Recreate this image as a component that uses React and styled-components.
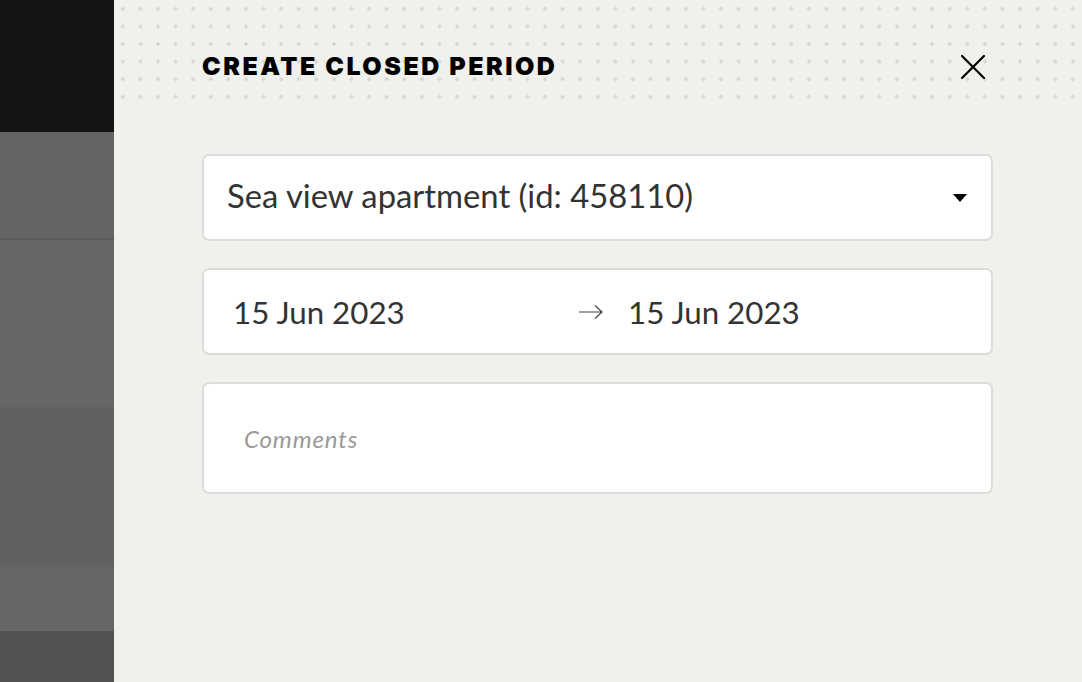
import React from "react";
import styled, { createGlobalStyle } from "styled-components";

const GlobalStyle = createGlobalStyle`
  html, body {
    margin: 0;
    padding: 0;
    height: 100%;
    overflow: hidden;
  }
  body {
    font-family: Lato, "Noto Sans", sans-serif;
    background: #f0f0ec;
  }
  #root {
    height: 100%;
  }
`;

const stripes = [
  { h: 132, c: "#141414" },
  { h: 106, c: "#646464" },
  { h: 2, c: "#5a5a5a" },
  { h: 167, c: "#666666" },
  { h: 158, c: "#616161" },
  { h: 66, c: "#666666" },
  { h: 51, c: "#525252" },
];

const CloseIcon = () => (
  <svg width="24" height="24" viewBox="0 0 24 24" fill="none">
    <path d="M1 1L23 23M23 1L1 23" stroke="#000" strokeWidth="2.2" strokeLinecap="square" />
  </svg>
);

const CaretIcon = () => (
  <svg width="14" height="8" viewBox="0 0 14 8">
    <path d="M0 0H14L7 8Z" fill="#000" />
  </svg>
);

const ArrowIcon = () => (
  <svg width="26" height="16" viewBox="0 0 26 16" fill="none">
    <path d="M1 8H24M17 1.5L24 8L17 14.5" stroke="#444" strokeWidth="1.2" />
  </svg>
);

const App = () => {
  return (
    <Page>
      <GlobalStyle />
      <Backdrop>
        {stripes.map((s, i) => (
          <Stripe key={i} $h={s.h} $c={s.c} />
        ))}
      </Backdrop>
      <Panel>
        <Header>
          <Title>Create closed period</Title>
          <CloseButton aria-label="Close">
            <CloseIcon />
          </CloseButton>
        </Header>
        <Form>
          <Field $h={87}>
            <SelectText>Sea view apartment (id: 458110)</SelectText>
            <CaretIcon />
          </Field>
          <Field $h={87}>
            <DateText>15 Jun 2023</DateText>
            <Arrow>
              <ArrowIcon />
            </Arrow>
            <DateText>15 Jun 2023</DateText>
          </Field>
          <CommentField $h={112}>
            <Placeholder>Comments</Placeholder>
          </CommentField>
        </Form>
      </Panel>
    </Page>
  );
};

const Page = styled.div`
  display: flex;
  height: 100%;
`;

const Backdrop = styled.div`
  width: 114px;
  flex-shrink: 0;
  display: flex;
  flex-direction: column;
  background: #525252;
`;

const Stripe = styled.div`
  height: ${(p) => p.$h}px;
  background: ${(p) => p.$c};
  flex-shrink: 0;
`;

const Panel = styled.div`
  flex: 1;
  background: #f0f0ec;
  display: flex;
  flex-direction: column;
`;

const Header = styled.div`
  height: 106px;
  box-sizing: border-box;
  padding: 50px 97px 0 88px;
  display: flex;
  justify-content: space-between;
  align-items: flex-start;
  background-image: radial-gradient(circle, #d6d6d3 1.5px, transparent 1.9px);
  background-size: 17.6px 17.6px;
  background-position: 0 0;
`;

const Title = styled.h1`
  margin: 0;
  font-family: Inter, "Liberation Sans", sans-serif;
  font-weight: 900;
  font-size: 25px;
  line-height: 32px;
  letter-spacing: 2.5px;
  text-transform: uppercase;
  color: #000;
`;

const CloseButton = styled.button`
  margin-top: 5px;
  padding: 0;
  border: none;
  background: none;
  width: 24px;
  height: 24px;
  display: flex;
  cursor: pointer;
`;

const Form = styled.div`
  margin-top: 48px;
  padding: 0 89px 0 88px;
  display: flex;
  flex-direction: column;
  gap: 27px;
`;

const Field = styled.div`
  height: ${(p) => p.$h}px;
  box-sizing: border-box;
  background: #fff;
  border: 2px solid #dcdcd9;
  border-radius: 7px;
  display: flex;
  align-items: center;
  padding: 0 24px 0 24px;
  color: #333;
`;

const CommentField = styled(Field)`
  padding-left: 40px;
`;

const SelectText = styled.span`
  flex: 1;
  font-size: 32.8px;
  line-height: 1;
  margin-top: -2px;
  margin-left: -1px;
`;

const DateText = styled.span`
  font-size: 31.3px;
  width: 346px;
  padding-left: 5px;
  &:last-child {
    width: auto;
    padding-left: 0;
  }
`;

const Arrow = styled.span`
  display: flex;
  width: 50px;
  margin-left: -1px;
`;

const Placeholder = styled.span`
  font-style: italic;
  font-size: 24px;
  letter-spacing: 0.9px;
  color: #9a9a9a;
`;

export default App;
